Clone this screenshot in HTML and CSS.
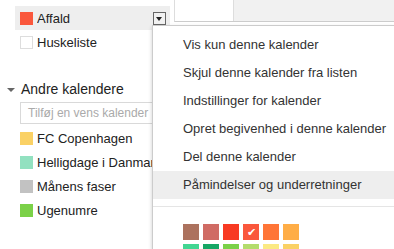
FILE: index.html
```html
<!DOCTYPE html>
<html lang="da">
<head>
  <meta charset="UTF-8">
  <title>Kalendere</title>
  <link rel="stylesheet" href="styles.css">
</head>
<body>
  <div class="page">
    <div class="sidebar">
      <div class="cal-row active">
        <span class="swatch" style="background:#fa573c"></span>
        <span class="cal-name">Affald</span>
        <span class="drop-btn"></span>
      </div>
      <div class="cal-row">
        <span class="swatch empty"></span>
        <span class="cal-name">Huskeliste</span>
      </div>

      <div class="section-title">
        <span class="arrow"></span>
        Andre kalendere
      </div>
      <div class="add-box">Tilføj en vens kalender</div>

      <div class="cal-row">
        <span class="swatch" style="background:#fad165"></span>
        <span class="cal-name">FC Copenhagen</span>
      </div>
      <div class="cal-row">
        <span class="swatch" style="background:#92e1c0"></span>
        <span class="cal-name">Helligdage i Danmark</span>
      </div>
      <div class="cal-row">
        <span class="swatch" style="background:#c2c2c2"></span>
        <span class="cal-name">Månens faser</span>
      </div>
      <div class="cal-row">
        <span class="swatch" style="background:#7bd148"></span>
        <span class="cal-name">Ugenumre</span>
      </div>
    </div>

    <div class="main">
      <div class="grid-head">
        <div class="head-cell blank"></div>
        <div class="head-cell"></div>
      </div>
    </div>
  </div>

  <div class="menu">
    <div class="menu-item">Vis kun denne kalender</div>
    <div class="menu-item">Skjul denne kalender fra listen</div>
    <div class="menu-item">Indstillinger for kalender</div>
    <div class="menu-item">Opret begivenhed i denne kalender</div>
    <div class="menu-item">Del denne kalender</div>
    <div class="menu-item hover">Påmindelser og underretninger</div>
    <div class="menu-sep"></div>
    <div class="palette">
      <span class="chip" style="background:#ac725e"></span>
      <span class="chip" style="background:#d06b64"></span>
      <span class="chip" style="background:#f83a22"></span>
      <span class="chip checked" style="background:#fa573c">&#10004;</span>
      <span class="chip" style="background:#ff7537"></span>
      <span class="chip" style="background:#ffad46"></span>
      <span class="chip" style="background:#42d692"></span>
      <span class="chip" style="background:#16a765"></span>
      <span class="chip" style="background:#7bd148"></span>
      <span class="chip" style="background:#b3dc6c"></span>
      <span class="chip" style="background:#fbe983"></span>
      <span class="chip" style="background:#fad165"></span>
    </div>
  </div>
</body>
</html>
```

FILE: styles.css
```css
html, body {
  margin: 0;
  padding: 0;
  overflow: hidden;
}
body {
  width: 394px;
  height: 249px;
  background: #fff;
  font-family: Arial, "Liberation Sans", sans-serif;
  font-size: 13px;
  color: #222;
  position: relative;
}
.page {
  display: flex;
  height: 249px;
}
.sidebar {
  width: 170px;
  flex: none;
  padding-top: 6px;
  overflow: hidden;
}
.cal-row {
  display: flex;
  align-items: center;
  height: 24px;
  margin-left: 15px;
  padding-left: 5px;
  white-space: nowrap;
}
.cal-row.active {
  background: #eee;
}
.swatch {
  width: 13px;
  height: 13px;
  flex: none;
  margin-right: 4px;
  box-sizing: border-box;
}
.swatch.empty {
  border: 1px solid #ddd;
  background: #fff;
}
.cal-name {
  flex: 1;
  overflow: hidden;
}
.drop-btn {
  width: 13px;
  height: 13px;
  margin-right: 4px;
  box-sizing: border-box;
  border: 1px solid #666;
  background: #f1f1f1;
  position: relative;
  flex: none;
}
.drop-btn::after {
  content: "";
  position: absolute;
  left: 2px;
  top: 4px;
  border-left: 3.5px solid transparent;
  border-right: 3.5px solid transparent;
  border-top: 4px solid #222;
}
.section-title {
  display: flex;
  align-items: center;
  margin-top: 25px;
  height: 20px;
  font-size: 14px;
  padding-left: 7px;
  white-space: nowrap;
}
.arrow {
  width: 0;
  height: 0;
  border-left: 4px solid transparent;
  border-right: 4px solid transparent;
  border-top: 4px solid #666;
  margin-right: 6px;
  margin-top: 2px;
}
.add-box {
  margin: 3px 0 2px 20px;
  height: 22px;
  box-sizing: border-box;
  border: 1px solid #d9d9d9;
  border-right: none;
  color: #aaa;
  font-size: 12px;
  line-height: 20px;
  padding-left: 7px;
  white-space: nowrap;
}
.main {
  flex: 1;
}
.grid-head {
  display: flex;
  height: 21px;
  margin-left: 4px;
  border-left: 1px solid #ddd;
  border-bottom: 1px solid #ccc;
}
.head-cell {
  flex: 1;
  background: #f1f1f1;
  border-left: 1px solid #ddd;
}
.head-cell.blank {
  flex: none;
  width: 58px;
  background: #fff;
  border-left: none;
}
.menu {
  position: absolute;
  left: 152px;
  top: 25px;
  width: 241px;
  height: 218px;
  overflow: hidden;
  background: #fff;
  border: 1px solid rgba(0, 0, 0, 0.2);
  border-right: none;
  border-bottom: none;
  box-shadow: 0 2px 4px rgba(0, 0, 0, 0.2);
  padding-top: 5px;
  color: #333;
}
.menu-item {
  height: 28px;
  line-height: 28px;
  padding-left: 30px;
  white-space: nowrap;
}
.menu-item.hover {
  background: #eee;
}
.menu-sep {
  margin-top: 7px;
  border-top: 1px solid #e5e5e5;
}
.palette {
  display: grid;
  grid-template-columns: repeat(6, 16px);
  gap: 4px;
  padding: 17px 0 0 30px;
}
.chip {
  width: 16px;
  height: 16px;
  color: #fff;
  font-size: 11px;
  line-height: 16px;
  text-align: center;
}
```
